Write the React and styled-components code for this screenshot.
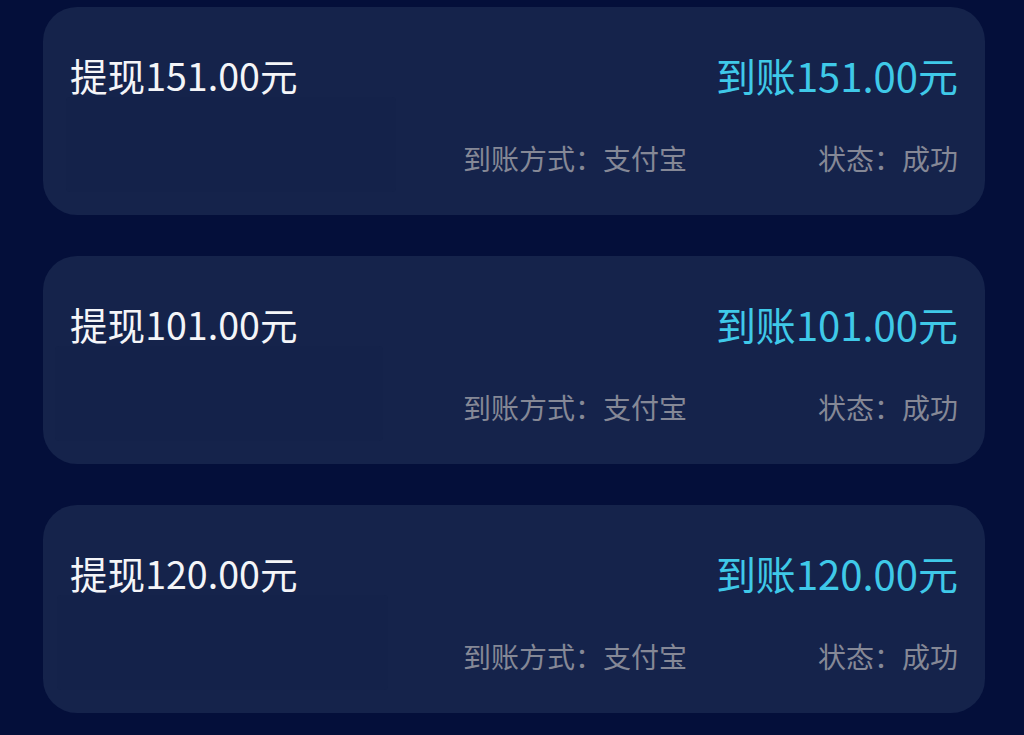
import React from 'react';
import styled, { createGlobalStyle } from 'styled-components';

const GlobalStyle = createGlobalStyle`
  html, body {
    margin: 0;
    padding: 0;
    background: #040f3a;
  }
  body {
    font-family: "Noto Sans CJK SC", "Noto Sans", sans-serif;
  }
`

const Page = styled.div`
  width: 1024px;
  min-height: 735px;
  box-sizing: border-box;
  padding: 7px 39px 20px 43px;
  display: flex;
  flex-direction: column;
  gap: 41px;
  background: #040f3a;
`

const Card = styled.div`
  height: 208px;
  box-sizing: border-box;
  padding: 46px 27px 0 27px;
  border-radius: 34px;
  background: #15234b;
  display: flex;
  flex-direction: column;
`

const TopRow = styled.div`
  display: flex;
  justify-content: space-between;
  align-items: center;
  height: 44px;
`

const Title = styled.span`
  font-size: 37.6px;
  line-height: 44px;
  color: #f4f5f8;
`

const Amount = styled.span`
  font-size: 40px;
  line-height: 44px;
  color: #3fc9e8;
`

const BottomRow = styled.div`
  display: flex;
  justify-content: space-between;
  align-items: flex-start;
`

// blurred-out area under the title
const Hidden = styled.div`
  width: ${p => p.w}px;
  height: 95px;
  margin-left: ${p => p.offset}px;
  background: #14224a;
  border-radius: 4px;
`

const Meta = styled.div`
  display: flex;
  gap: 131px;
  margin-top: 41px;
  font-size: 28px;
  line-height: 40px;
  color: #858896;
`

const records = [
  { id: 1, cash: '151.00', hidden: 330, offset: -4 },
  { id: 2, cash: '101.00', hidden: 328, offset: -15 },
  { id: 3, cash: '120.00', hidden: 331, offset: -13 },
]

const App = () => {
  return (
    <Page>
      <GlobalStyle />
      {records.map(r => (
        <Card key={r.id}>
          <TopRow>
            <Title>提现{r.cash}元</Title>
            <Amount>到账{r.cash}元</Amount>
          </TopRow>
          <BottomRow>
            <Hidden w={r.hidden} offset={r.offset} />
            <Meta>
              <span>到账方式：支付宝</span>
              <span>状态：成功</span>
            </Meta>
          </BottomRow>
        </Card>
      ))}
    </Page>
  )
}

export default App;
